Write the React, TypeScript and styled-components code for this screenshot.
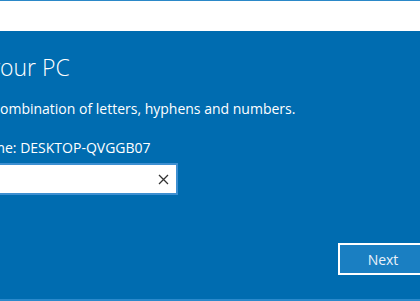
import React from "react";
import styled, { createGlobalStyle } from "styled-components";

const Global = createGlobalStyle`
  html, body { margin: 0; padding: 0; }
  body { font-family: "Open Sans", "Noto Sans", "Liberation Sans", sans-serif; }
`;

const Frame = styled.div`
  width: 420px;
  height: 301px;
  overflow: hidden;
  display: flex;
  flex-direction: column;
  box-sizing: border-box;
`;

const TopBar = styled.div`
  height: 30px;
  flex: 0 0 30px;
  background: #ffffff;
  border-top: 1px solid #2b88c8;
`;

const Panel = styled.main`
  flex: 1;
  background: #006cb0;
  border-bottom: 2px solid #2a89cb;
  display: flex;
  flex-direction: column;
  padding: 20px 0 24px 0;
  color: #ffffff;
  overflow: hidden;
`;

const Line = styled.div<{ $size: number; $lh: number; $weight?: number; $mt?: number; $pl?: number }>`
  display: flex;
  white-space: nowrap;
  font-size: ${(p) => p.$size}px;
  line-height: ${(p) => p.$lh}px;
  font-weight: ${(p) => p.$weight ?? 400};
  margin-top: ${(p) => p.$mt ?? 0}px;
  padding-left: ${(p) => p.$pl ?? 0}px;
`;

const Cut = styled.span`
  display: flex;
  width: 0;
  justify-content: flex-end;
  white-space: nowrap;
`;

const InputBox = styled.div`
  margin-top: 5px;
  margin-left: -4px;
  width: 182px;
  height: 32px;
  box-sizing: border-box;
  background: #ffffff;
  border: 2px solid #3d8fd1;
  display: flex;
  align-items: center;
  justify-content: flex-end;
  padding-right: 7px;
`;

const ButtonRow = styled.div`
  margin-top: auto;
  display: flex;
  justify-content: flex-end;
  margin-right: -8px;
`;

const NextButton = styled.button`
  width: 90px;
  height: 32px;
  box-sizing: border-box;
  background: #1a7fc2;
  border: 2px solid #ffffff;
  color: #eaf2fa;
  font-family: "Open Sans", "Noto Sans", sans-serif;
  font-size: 14px;
  padding: 0;
`;

const Text = styled.span``;

export default function App() {
  return (
    <>
      <Global />
      <Frame>
        <TopBar />
        <Panel>
          <Line $size={23} $lh={32} $weight={300}>
            <Cut>Name y</Cut>
            <Text>our PC</Text>
          </Line>
          <Line $size={14} $lh={20} $mt={16}>
            <Cut>You can use a c</Cut>
            <Text>ombination of letters, hyphens and numbers.</Text>
          </Line>
          <Line $size={14} $lh={20} $mt={19} $pl={5}>
            <Cut>Current PC nam</Cut>
            <Text>e: DESKTOP-QVGGB07</Text>
          </Line>
          <InputBox>
            <svg width="11" height="11" viewBox="0 0 11 11">
              <path d="M1 1 L10 10 M10 1 L1 10" stroke="#333" strokeWidth="1.3" fill="none" />
            </svg>
          </InputBox>
          <ButtonRow>
            <NextButton>Next</NextButton>
          </ButtonRow>
        </Panel>
      </Frame>
    </>
  );
}
